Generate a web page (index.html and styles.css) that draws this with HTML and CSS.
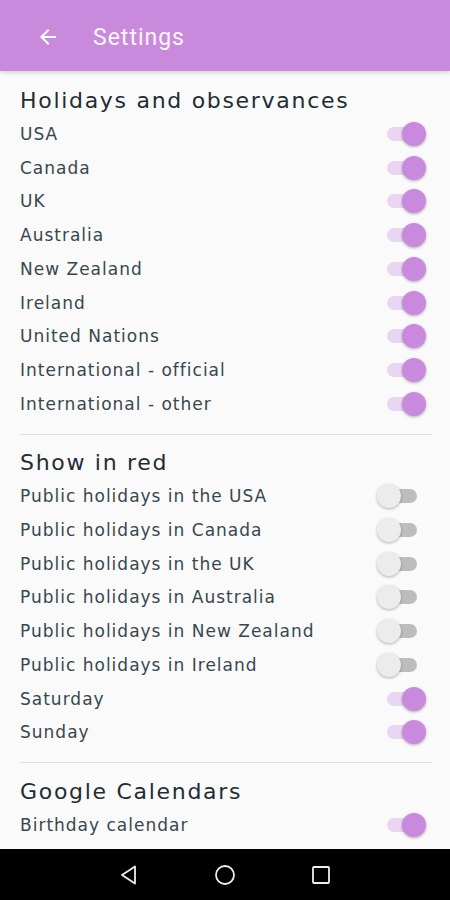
FILE: index.html
```html
<!DOCTYPE html>
<html lang="en">
<head>
    <meta charset="UTF-8">
    <meta name="viewport" content="width=device-width, initial-scale=1.0">
    <title>Settings</title>
    <link rel="stylesheet" href="styles.css">
</head>
<body>

    <div class="appbar">
        <svg class="back" width="24" height="24" viewBox="0 0 24 24">
            <path d="M20 11H7.83l5.59-5.59L12 4l-8 8 8 8 1.41-1.41L7.83 13H20v-2z" fill="#fff"/>
        </svg>
        <span class="title">Settings</span>
    </div>

    <div class="content">
        <div class="section">
            <h2>Holidays and observances</h2>
            <div class="row"><span>USA</span><span class="switch on"></span></div>
            <div class="row"><span>Canada</span><span class="switch on"></span></div>
            <div class="row"><span>UK</span><span class="switch on"></span></div>
            <div class="row"><span>Australia</span><span class="switch on"></span></div>
            <div class="row"><span>New Zealand</span><span class="switch on"></span></div>
            <div class="row"><span>Ireland</span><span class="switch on"></span></div>
            <div class="row"><span>United Nations</span><span class="switch on"></span></div>
            <div class="row"><span>International - official</span><span class="switch on"></span></div>
            <div class="row"><span>International - other</span><span class="switch on"></span></div>
        </div>

        <div class="section">
            <h2>Show in red</h2>
            <div class="row"><span>Public holidays in the USA</span><span class="switch"></span></div>
            <div class="row"><span>Public holidays in Canada</span><span class="switch"></span></div>
            <div class="row"><span>Public holidays in the UK</span><span class="switch"></span></div>
            <div class="row"><span>Public holidays in Australia</span><span class="switch"></span></div>
            <div class="row"><span>Public holidays in New Zealand</span><span class="switch"></span></div>
            <div class="row"><span>Public holidays in Ireland</span><span class="switch"></span></div>
            <div class="row"><span>Saturday</span><span class="switch on"></span></div>
            <div class="row"><span>Sunday</span><span class="switch on"></span></div>
        </div>

        <div class="section">
            <h2>Google Calendars</h2>
            <div class="row"><span>Birthday calendar</span><span class="switch on"></span></div>
        </div>
    </div>

    <div class="navbar">
        <svg width="24" height="24" viewBox="0 0 24 24">
            <path d="M18 3.5 L5 12 L18 20.5 Z" fill="none" stroke="#eee" stroke-width="1.8" stroke-linejoin="round"/>
        </svg>
        <svg width="24" height="24" viewBox="0 0 24 24">
            <circle cx="12" cy="12" r="9" fill="none" stroke="#eee" stroke-width="1.8"/>
        </svg>
        <svg width="24" height="24" viewBox="0 0 24 24">
            <rect x="4" y="4" width="16" height="16" rx="1" fill="none" stroke="#eee" stroke-width="1.8"/>
        </svg>
    </div>

</body>
</html>
```

FILE: styles.css
```css
/* Global Styles */
body {
    font-family: "DejaVu Sans", "Noto Sans", sans-serif;
    background-color: #fafafa;
    color: #37474f;
    margin: 0;
    padding: 0;
    width: 450px;
    height: 900px;
    display: flex;
    flex-direction: column;
    overflow: hidden;
}

/* App Bar */
.appbar {
    height: 68px;
    padding-top: 3px;
    flex-shrink: 0;
    background-color: #c98ade;
    display: flex;
    align-items: center;
    padding-left: 36px;
    box-shadow: 0 2px 4px rgba(0, 0, 0, 0.15);
}

.back {
    width: 24px;
    height: 24px;
}

.title {
    font-family: Roboto, sans-serif;
    font-size: 23px;
    color: #fdf6ff;
    margin-left: 33px;
    letter-spacing: 1px;
}

/* Settings list */
.content {
    flex: 1;
    padding: 0 18px 0 20px;
    overflow: hidden;
}

.section {
    border-bottom: 1px solid #e0e0e0;
    padding-bottom: 13px;
}

.section:last-child {
    border-bottom: none;
}

h2 {
    font-size: 22px;
    font-weight: normal;
    color: #1f2d33;
    letter-spacing: 1.7px;
    margin: 0;
    height: 32px;
    line-height: 32px;
    padding-top: 14px;
}

.section + .section h2 {
    padding-top: 12.5px;
}

.row {
    display: flex;
    align-items: center;
    justify-content: space-between;
    height: 33.75px;
    font-size: 17px;
    letter-spacing: 1px;
    color: #37474f;
}

/* Switches */
.switch {
    position: relative;
    width: 30px;
    height: 14px;
    border-radius: 7px;
    background: #bdbdbd;
    margin-right: 15px;
}

.switch::after {
    content: "";
    position: absolute;
    left: -10px;
    top: -5px;
    width: 24px;
    height: 24px;
    border-radius: 50%;
    background: #ececec;
    box-shadow: 0 1px 3px rgba(0, 0, 0, 0.3);
}

.switch.on {
    background: #ead6f2;
}

.switch.on::after {
    left: auto;
    right: -9px;
    background: #c98ade;
}

/* Nav bar */
.navbar {
    height: 51px;
    flex-shrink: 0;
    background: #000;
    display: flex;
    align-items: center;
    justify-content: center;
    gap: 72px;
}
```
